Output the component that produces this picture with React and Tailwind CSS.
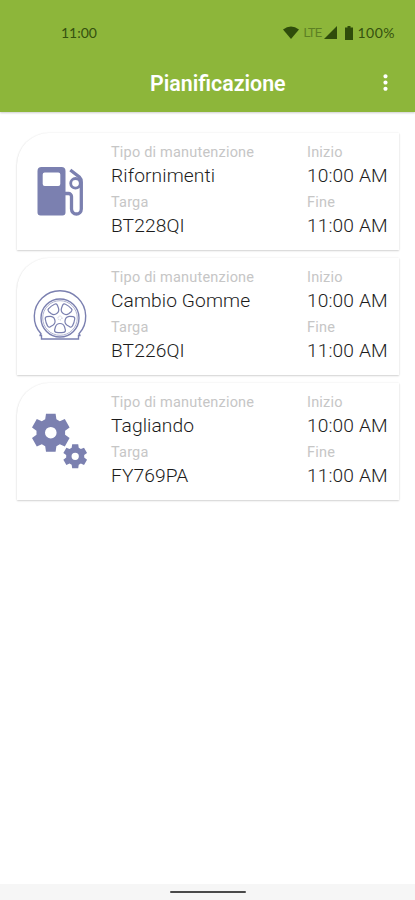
import { MdMoreVert } from 'react-icons/md'

function FuelIcon() {
  return (
    <svg viewBox="0 0 60 60" className="w-[60px] h-[60px]">
      <path
        fillRule="evenodd"
        fill="#7b80b0"
        d="M11.500 7h20a4 4 0 0 1 4 4v41.500a3 3 0 0 1-3 3H10.500a3 3 0 0 1-3-3V11a4 4 0 0 1 4-4zM14.700 12.500a2 2 0 0 0-2 2v9.500a2 2 0 0 0 2 2h13.600a2 2 0 0 0 2-2v-9.500a2 2 0 0 0-2-2z"
      />
      <path
        d="M34 33.500h4.500a3 3 0 0 1 3 3v12.500a4.900 5 0 0 0 9.800 0V22c0-2.500-.5-3.500-2-5l-9-7"
        fill="none"
        stroke="#7b80b0"
        strokeWidth="3.300"
      />
      <circle cx="45.500" cy="23.300" r="4.800" fill="none" stroke="#7b80b0" strokeWidth="2.800" />
    </svg>
  )
}

function TireIcon() {
  return (
    <svg viewBox="0 0 60 60" className="w-[60px] h-[60px]" fill="none" stroke="#7b80b0" strokeWidth="1.400">
      <path d="M11.500 54v-3.500h-2Q11 50 11 48.800A25.700 25.700 0 1 1 49 48.800Q49 50 50.500 50.500h-2V54z" />
      <circle cx="30" cy="33" r="19" />
      <circle cx="30" cy="33" r="17.300" strokeWidth="0.600" />
      {[0, 72, 144, 216, 288].map((deg) => (
        <path
          key={deg}
          transform={`translate(30 33) rotate(${deg})`}
          strokeWidth="1.200"
          d="M0 5.500C3 5.500 4 7 4.600 9L5.400 12Q5.600 14 3.600 14.300 0 15 -3.600 14.300-5.600 14-5.400 12L-4.600 9C-4 7-3 5.500 0 5.500z"
        />
      ))}
      <circle cx="30" cy="33" r="2" strokeWidth="0.500" strokeDasharray="1 1" />
    </svg>
  )
}

const gearPath =
  'M-4.800-19H4.800L5.600-13.500 9-11.500 14-13.700 18.800-5.300 14.300-2V2L18.800 5.300 14 13.700 9 11.500 5.600 13.500 4.800 19H-4.800L-5.600 13.500-9 11.500-14 13.700-18.800 5.300-14.300 2V-2L-18.800-5.300-14-13.700-9-11.500-5.600-13.500ZM0-5.800A5.800 5.800 0 1 0 0 5.800 5.800 5.800 0 1 0 0-5.800Z'

function GearsIcon() {
  return (
    <svg viewBox="0 0 60 60" className="w-[60px] h-[60px]" fill="#7b80b0" fillRule="evenodd">
      <path d={gearPath} transform="translate(20.800 22.700)" />
      <path d={gearPath} transform="translate(45.200 46.300) scale(0.630)" />
    </svg>
  )
}

const items = [
  { icon: FuelIcon, type: 'Rifornimenti', plate: 'BT228QI', start: '10:00 AM', end: '11:00 AM' },
  { icon: TireIcon, type: 'Cambio Gomme', plate: 'BT226QI', start: '10:00 AM', end: '11:00 AM' },
  { icon: GearsIcon, type: 'Tagliando', plate: 'FY769PA', start: '10:00 AM', end: '11:00 AM' },
]

function Field({ label, value }) {
  return (
    <div className="h-[50px]">
      <p className="h-[21px] text-[14.500px] leading-[21px] tracking-[0.2px] text-[#c6c6c6] whitespace-nowrap">{label}</p>
      <p className="text-[19.200px] leading-[26px] font-light tracking-[0.1px] text-[#1c1c1c] whitespace-nowrap">{value}</p>
    </div>
  )
}

function Card({ item }) {
  const Icon = item.icon
  return (
    <div className="h-[117px] flex bg-white rounded-tl-[32px] shadow-[0_1px_2px_rgba(0,0,0,0.16),0_0_2px_rgba(0,0,0,0.08)]">
      <div className="w-[94px] pl-[13px] pt-[27px] shrink-0">
        <Icon />
      </div>
      <div className="w-[196px] pt-[9px] shrink-0">
        <Field label="Tipo di manutenzione" value={item.type} />
        <Field label="Targa" value={item.plate} />
      </div>
      <div className="pt-[9px]">
        <Field label="Inizio" value={item.start} />
        <Field label="Fine" value={item.end} />
      </div>
    </div>
  )
}

function StatusBar() {
  return (
    <div className="h-[56px] pt-[9px] pl-[61px] pr-[20px] flex items-center justify-between font-[Lato,sans-serif] text-[14px] text-[#35510f]">
      <span>11:00</span>
      <div className="flex items-center">
        <svg viewBox="0 0 16 13" className="w-4 h-[13px]" fill="#2f4c0b">
          <path d="M0 3.500Q8-2.500 16 3.500L8 13z" />
        </svg>
        <span className="w-[19px] ml-1 font-[Roboto,sans-serif] text-[13px] tracking-[-0.8px] text-[#5d8024]">LTE</span>
        <svg viewBox="0 0 13 13" className="w-[13px] h-[13px] ml-[2px]" fill="#2f4c0b">
          <path d="M13 0v13H0z" />
        </svg>
        <svg viewBox="0 0 8 14" className="w-2 h-[14px] ml-2" fill="#2f4c0b">
          <path d="M2.500 0h3v1.500H8V14H0V1.500h2.500z" />
        </svg>
        <span className="ml-[4px] tracking-[0.500px]">100%</span>
      </div>
    </div>
  )
}

export default function App() {
  return (
    <div className="w-full h-[900px] flex flex-col bg-white font-[Roboto,sans-serif]">
      <header className="h-[112px] shrink-0 bg-[#8db63a] shadow-[0_1px_2px_rgba(0,0,0,0.2)]">
        <StatusBar />
        <div className="h-14 pl-[150px] pr-[17px] flex items-center justify-between text-white">
          <h1 className="text-[21.400px] font-semibold">Pianificazione</h1>
          <MdMoreVert className="w-[25px] h-[25px] -mt-[3px]" />
        </div>
      </header>

      <main className="flex-1 pt-[21px] pl-[17px] pr-4 flex flex-col gap-2">
        {items.map((item) => (
          <Card key={item.type} item={item} />
        ))}
      </main>

      {/* Gesture bar */}
      <footer className="h-4 shrink-0 bg-[#f6f6f6] flex items-center justify-center">
        <div className="w-[76px] h-[2px] rounded-full bg-[#4a4a4a]" />
      </footer>
    </div>
  )
}
